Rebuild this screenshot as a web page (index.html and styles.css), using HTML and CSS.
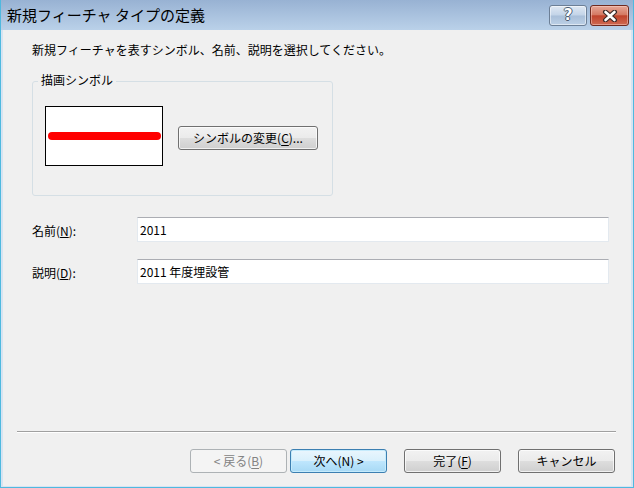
FILE: index.html
```html
<!DOCTYPE html>
<html lang="ja">
<head>
    <meta charset="UTF-8">
    <title>新規フィーチャ タイプの定義</title>
    <link rel="stylesheet" href="styles.css">
</head>
<body>
    <div class="window">
        <!-- タイトルバー -->
        <div class="titlebar">
            <span class="title">新規フィーチャ タイプの定義</span>
            <div class="caption-buttons">
                <button class="cap help"><span class="q">?</span></button>
                <button class="cap close">
                    <svg width="16" height="12" viewBox="0 0 16 12">
                        <path d="M3.5 2 L12.5 10 M12.5 2 L3.5 10" stroke="#3b2a28" stroke-width="5" stroke-linecap="round"/>
                        <path d="M3.5 2 L12.5 10 M12.5 2 L3.5 10" stroke="#fff" stroke-width="2.6" stroke-linecap="round"/>
                    </svg>
                </button>
            </div>
        </div>

        <div class="client">
            <p class="intro">新規フィーチャを表すシンボル、名前、説明を選択してください。</p>

            <!-- 描画シンボル -->
            <div class="group">
                <span class="group-label">描画シンボル</span>
                <div class="preview">
                    <div class="stroke"></div>
                </div>
                <button class="btn symbol-btn">シンボルの変更(<u>C</u>)...</button>
            </div>

            <div class="field first">
                <label class="field-label">名前(<u>N</u>):</label>
                <input class="textbox" type="text" value="2011" readonly>
            </div>
            <div class="field">
                <label class="field-label">説明(<u>D</u>):</label>
                <input class="textbox" type="text" value="2011 年度埋設管" readonly>
            </div>

            <div class="spacer"></div>
            <div class="separator"></div>

            <div class="actions">
                <button class="btn wiz disabled">&lt; 戻る(<u>B</u>)</button>
                <button class="btn wiz default">次へ(N) &gt;</button>
                <button class="btn wiz wide">完了(<u>F</u>)</button>
                <button class="btn wiz wide">キャンセル</button>
            </div>
        </div>
    </div>
</body>
</html>
```

FILE: styles.css
```css
/* ダイアログ全体 */
* {
    box-sizing: border-box;
}
body {
    margin: 0;
    font-family: "Noto Sans CJK JP", "Liberation Sans", sans-serif;
    font-size: 12px;
    color: #000;
    background: #fff;
}
.window {
    width: 634px;
    height: 488px;
    display: flex;
    flex-direction: column;
    background: #d6e4f2;
    border: 1px solid #4fb9df;
    border-top: none;
}

/* タイトルバー */
.titlebar {
    height: 30px;
    flex: none;
    display: flex;
    align-items: flex-start;
    padding: 0 4px 0 6px;
    background: linear-gradient(#98b2d3, #bad1e9);
}
.title {
    font-size: 15px;
    line-height: 30px;
    color: #000;
}
.caption-buttons {
    margin-left: auto;
    margin-top: 5px;
    display: flex;
    gap: 3px;
}
.cap {
    height: 21px;
    padding: 0;
    border-radius: 3px;
    display: flex;
    align-items: center;
    justify-content: center;
}
.help {
    width: 38px;
    border: 1px solid #6c7f96;
    background: linear-gradient(#dfe8f3, #c3d4e8 48%, #a9bfd9 52%, #bcd0e6);
    box-shadow: inset 0 0 0 1px rgba(255, 255, 255, 0.5);
}
.help .q {
    font-family: "DejaVu Sans", sans-serif;
    font-weight: bold;
    font-size: 15px;
    line-height: 15px;
    color: #fff;
    text-shadow: 1px 0 #4b5b70, -1px 0 #4b5b70, 0 1px #4b5b70, 0 -1px #4b5b70;
}
.close {
    width: 39px;
    border: 1px solid #6f2a1f;
    background: linear-gradient(#e6a797, #d57a64 45%, #c0432c 52%, #cf6a52);
    box-shadow: inset 0 0 0 1px rgba(255, 220, 210, 0.45);
}

/* クライアント領域 */
.client {
    flex: 1;
    margin: 0 2px 1px 2px;
    background: #f0f0f0;
    display: flex;
    flex-direction: column;
    padding-left: 29px;
}
.intro {
    margin: 12px 0 0 0;
    line-height: 16px;
}

/* グループボックス */
.group {
    position: relative;
    margin-top: 23px;
    width: 301px;
    height: 115px;
    border: 1px solid #d5dfe5;
    border-radius: 3px;
    display: flex;
    align-items: flex-start;
    padding: 24px 0 0 12px;
}
.group-label {
    position: absolute;
    top: -10px;
    left: 5px;
    padding: 0 3px;
    line-height: 16px;
    background: #f0f0f0;
}
.preview {
    width: 118px;
    height: 60px;
    border: 1px solid #000;
    background: #fff;
    padding: 25px 0 0 2px;
}
.stroke {
    width: 113px;
    height: 8px;
    border-radius: 4px;
    background: #ff0000;
}

/* ボタン */
.btn {
    font-family: inherit;
    font-size: 12px;
    color: #000;
    padding: 0;
    border: 1px solid #707070;
    border-radius: 3px;
    background: linear-gradient(#f2f2f2, #ebebeb 48%, #dddddd 52%, #cfcfcf);
    box-shadow: inset 0 0 0 1px rgba(255, 255, 255, 0.7);
    line-height: 16px;
}
.btn u {
    text-decoration-thickness: 1px;
    text-underline-offset: 2px;
}
.symbol-btn {
    margin: 20px 0 0 15px;
    width: 140px;
    height: 24px;
}

/* 入力欄 */
.field {
    display: flex;
    align-items: flex-start;
    margin-top: 17px;
}
.field.first {
    margin-top: 21px;
}
.field-label {
    width: 105px;
    margin-top: 6px;
    line-height: 16px;
}
.textbox {
    width: 472px;
    height: 25px;
    padding: 0 2px;
    font-family: inherit;
    font-size: 12px;
    color: #000;
    background: #fff;
    border: 1px solid #e3e9ef;
    border-top-color: #abadb3;
    outline: none;
}

.spacer {
    flex: 1;
}
.separator {
    margin: 0 15px 0 -15px;
    height: 2px;
    border-top: 1px solid #a0a0a0;
    border-bottom: 1px solid #ffffff;
}

/* ウィザードボタン */
.actions {
    display: flex;
    justify-content: flex-end;
    margin: 16px 16px 13px 0;
}
.wiz {
    width: 97px;
    height: 24px;
}
.wiz + .wiz {
    margin-left: 3px;
}
.wiz.wide {
    margin-left: 17px;
}
.wiz.disabled {
    color: #838383;
    border-color: #adb2b5;
    background: #f4f4f4;
    box-shadow: none;
}
.wiz.default {
    border-color: #3c7fb1;
    background: linear-gradient(#eaf6fd, #d9f0fc 48%, #bee6fd 52%, #a7d9f5);
    box-shadow: inset 0 0 0 1px #c5ebfc;
}
```
